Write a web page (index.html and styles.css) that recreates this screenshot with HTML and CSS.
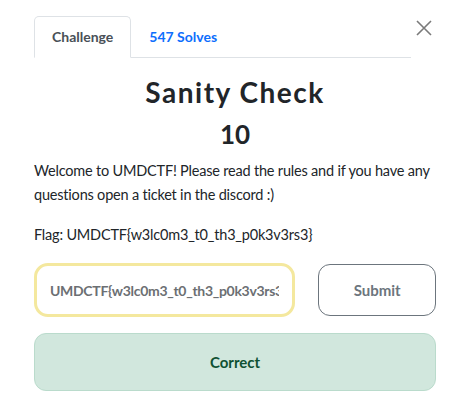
FILE: index.html
```html
<!DOCTYPE html>
<html lang="en">
<head>
<meta charset="utf-8">
<title>Sanity Check</title>
<link rel="stylesheet" href="styles.css">
</head>
<body>
<div class="modal">
  <div class="head">
    <ul class="tabs">
      <li class="tab active">Challenge</li>
      <li class="tab link">547 Solves</li>
    </ul>
    <button class="close" aria-label="Close">
      <svg width="16" height="16" viewBox="0 0 16 16"><path d="M1 1L15 15M15 1L1 15" stroke="#7a7a7a" stroke-width="1.6" fill="none"/></svg>
    </button>
  </div>
  <h2 class="title">Sanity Check</h2>
  <h3 class="points">10</h3>
  <p class="desc">Welcome to UMDCTF! Please read the rules and if you have any questions open a ticket in the discord :)</p>
  <p class="desc">Flag: UMDCTF{w3lc0m3_t0_th3_p0k3v3rs3}</p>
  <form class="submit-row">
    <input class="flag-input" type="text" value="UMDCTF{w3lc0m3_t0_th3_p0k3v3rs3}">
    <button class="submit" type="button">Submit</button>
  </form>
  <div class="alert">Correct</div>
</div>
</body>
</html>
```

FILE: styles.css
```css
html, body {
  margin: 0;
  padding: 0;
  background: #fff;
}
body {
  font-family: Lato, "Noto Sans", sans-serif;
  color: #212529;
}
.modal {
  width: 402px;
  padding: 16px 0 0 34px;
}
.head {
  display: flex;
  align-items: flex-start;
}
.tabs {
  flex: 1;
  display: flex;
  margin: 0;
  padding: 0;
  list-style: none;
  border-bottom: 1px solid #dee2e6;
}
.tab {
  padding: 8px 17px;
  line-height: 24px;
  font-size: 14px;
  font-weight: 700;
  border: 1px solid transparent;
  border-radius: 5px 5px 0 0;
  margin-bottom: -1px;
}
.tab.active {
  color: #495057;
  border-color: #dee2e6 #dee2e6 #fff;
  background: #fff;
}
.tab.link {
  color: #0d6efd;
}
.close {
  margin: 4px 4px 0 5px;
  padding: 0;
  border: 0;
  background: none;
  width: 16px;
  height: 16px;
  display: flex;
}
.title {
  margin: 17px 0 0;
  text-align: center;
  font-size: 28px;
  line-height: 34px;
  font-weight: 700;
  letter-spacing: 1.5px;
}
.points {
  margin: 10px 0 0;
  text-align: center;
  font-size: 26px;
  line-height: 31px;
  font-weight: 700;
}
.desc {
  margin: 9px 0 0;
  font-size: 14.5px;
  letter-spacing: -0.2px;
  line-height: 24px;
}
.desc + .desc {
  margin-top: 16px;
}
.submit-row {
  display: flex;
  align-items: center;
  gap: 23px;
  margin-top: 16px;
}
.flag-input {
  box-sizing: border-box;
  width: 262px;
  height: 54px;
  padding: 0 13px;
  border: 3px solid #f4e89e;
  border-radius: 14px;
  font-family: Lato, sans-serif;
  font-size: 14px;
  letter-spacing: -0.3px;
  font-weight: 700;
  color: #6c6f73;
  outline: none;
}
.submit {
  box-sizing: border-box;
  width: 118px;
  height: 52px;
  border: 1px solid #6c757d;
  border-radius: 12px;
  background: #fff;
  font-family: Lato, sans-serif;
  font-size: 15px;
  font-weight: 700;
  color: #6c757d;
}
.alert {
  box-sizing: border-box;
  margin-top: 16px;
  height: 58px;
  display: flex;
  align-items: center;
  justify-content: center;
  background: #d1e7dd;
  border: 1px solid #badbcc;
  border-radius: 12px;
  color: #0f5132;
  font-size: 15px;
  font-weight: 700;
}
```
